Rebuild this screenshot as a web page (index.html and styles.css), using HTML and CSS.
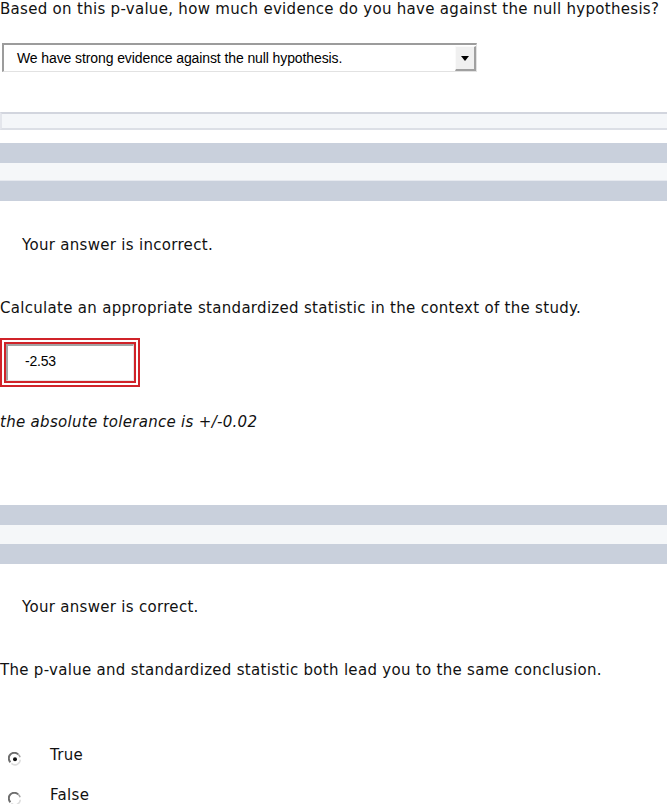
FILE: index.html
```html
<!DOCTYPE html>
<html>
<head>
<meta charset="utf-8">
<link rel="stylesheet" href="styles.css">
</head>
<body>
<p class="q1">Based on this p-value, how much evidence do you have against the null hypothesis?</p>
<div class="select">
  <span class="select-text">We have strong evidence against the null hypothesis.</span>
  <span class="select-btn"><span class="tri"></span></span>
</div>
<div class="bar"></div>
<div class="bands bands1">
  <div class="band dark"></div>
  <div class="band light"></div>
  <div class="band dark"></div>
</div>
<p class="feedback fb1">Your answer is incorrect.</p>
<p class="q2">Calculate an appropriate standardized statistic in the context of the study.</p>
<div class="redbox">
  <div class="redinner">
    <div class="input">-2.53</div>
  </div>
</div>
<p class="tol">the absolute tolerance is +/-0.02</p>
<div class="bands bands2">
  <div class="band dark"></div>
  <div class="band light2"></div>
  <div class="band dark"></div>
</div>
<p class="feedback fb2">Your answer is correct.</p>
<p class="q3">The p-value and standardized statistic both lead you to the same conclusion.</p>
<div class="opt opt-true">
  <svg class="radio" width="14" height="14" viewBox="0 0 14 14">
    <circle cx="7" cy="7" r="5.3" fill="#fff"/>
    <path d="M2.4 10.2 A5.3 5.3 0 0 1 10.2 2.4" fill="none" stroke="#6e6e6e" stroke-width="2"/>
    <path d="M10.2 2.4 A5.3 5.3 0 0 1 12.1 5.2" fill="none" stroke="#a8a8a8" stroke-width="1.6"/>
    <path d="M12.3 7.8 A5.3 5.3 0 0 1 3.4 11.4" fill="none" stroke="#dddddd" stroke-width="1.5"/>
    <circle cx="7" cy="7.2" r="2" fill="#111"/>
  </svg>
  <span class="label">True</span>
</div>
<div class="opt opt-false">
  <svg class="radio" width="14" height="14" viewBox="0 0 14 14">
    <circle cx="7" cy="7" r="5.3" fill="#fff"/>
    <path d="M2.4 10.2 A5.3 5.3 0 0 1 10.2 2.4" fill="none" stroke="#6e6e6e" stroke-width="2"/>
    <path d="M10.2 2.4 A5.3 5.3 0 0 1 12.1 5.2" fill="none" stroke="#a8a8a8" stroke-width="1.6"/>
    <path d="M12.3 7.8 A5.3 5.3 0 0 1 3.4 11.4" fill="none" stroke="#dddddd" stroke-width="1.5"/>
  </svg>
  <span class="label">False</span>
</div>
</body>
</html>
```

FILE: styles.css
```css
html, body {
  margin: 0;
  padding: 0;
  background: #fff;
}
body {
  font-family: "DejaVu Sans", Verdana, sans-serif;
  font-size: 15px;
  letter-spacing: 0.3px;
  line-height: 18px;
  color: #111;
  width: 667px;
  overflow: hidden;
}
p {
  margin: 0;
  white-space: nowrap;
}
.q1 {
  margin-top: 0;
}
.select {
  margin: 25px 0 0 2px;
  width: 475px;
  height: 29px;
  box-sizing: border-box;
  border-top: 2px solid #9c9c9c;
  border-left: 2px solid #9c9c9c;
  border-right: 1px solid #e2e2e2;
  border-bottom: 1px solid #e2e2e2;
  display: flex;
  align-items: center;
  justify-content: space-between;
  background: #fff;
}
.select-text {
  font-family: "Liberation Sans", Arial, sans-serif;
  font-size: 14px;
  letter-spacing: -0.1px;
  padding-left: 13px;
  color: #000;
}
.select-btn {
  width: 21px;
  height: 25px;
  box-sizing: border-box;
  margin-right: 0;
  background: #f0f0f0;
  border-top: 1px solid #fafafa;
  border-left: 1px solid #fafafa;
  border-right: 2px solid #a0a0a0;
  border-bottom: 2px solid #a0a0a0;
  display: flex;
  align-items: center;
  justify-content: center;
}
.tri {
  width: 0;
  height: 0;
  border-left: 4px solid transparent;
  border-right: 4px solid transparent;
  border-top: 5px solid #000;
  margin-top: 1px;
}
.bar {
  margin-top: 40px;
  height: 18px;
  box-sizing: border-box;
  background: #f4f6f9;
  border-top: 2px solid #d2d5de;
  border-bottom: 2px solid #dcdfe6;
  border-left: 2px solid #e4e6ec;
}
.bands1 {
  margin-top: 13px;
}
.bands2 {
  margin-top: 74px;
}
.band.dark {
  height: 20px;
  background: #c9d0dc;
}
.band.light {
  background: #f5f7f9;
  border-bottom: 1px solid #e6e9ef;
  height: 17px;
}
.band.light2 {
  height: 19px;
  background: #f5f7f9;
}
.feedback {
  padding-left: 22px;
}
.fb1 {
  margin-top: 35px;
}
.q2 {
  margin-top: 45px;
}
.redbox {
  margin-top: 21px;
  width: 140px;
  height: 49px;
  box-sizing: border-box;
  border: 2px solid #d02329;
  padding: 2px;
}
.redinner {
  height: 100%;
  box-sizing: border-box;
  border: 2px solid #d02329;
}
.input {
  height: 100%;
  box-sizing: border-box;
  border-top: 2px solid #a3a3a3;
  border-left: 2px solid #a3a3a3;
  border-right: 1px solid #e6e6e6;
  border-bottom: 1px solid #e6e6e6;
  background: #fff;
  font-family: "Liberation Sans", Arial, sans-serif;
  font-size: 14px;
  letter-spacing: -0.2px;
  color: #000;
  display: flex;
  align-items: center;
  padding-left: 17px;
  padding-bottom: 4px;
}
.tol {
  margin-top: 26px;
  font-style: italic;
}
.fb2 {
  margin-top: 34px;
}
.q3 {
  margin-top: 45px;
}
.opt {
  display: flex;
  align-items: center;
  height: 18px;
}
.opt-true {
  margin-top: 67px;
}
.opt-false {
  margin-top: 22px;
}
.radio {
  margin-left: 8px;
  margin-top: 7px;
  flex: none;
}
.label {
  margin-left: 28px;
}
```
